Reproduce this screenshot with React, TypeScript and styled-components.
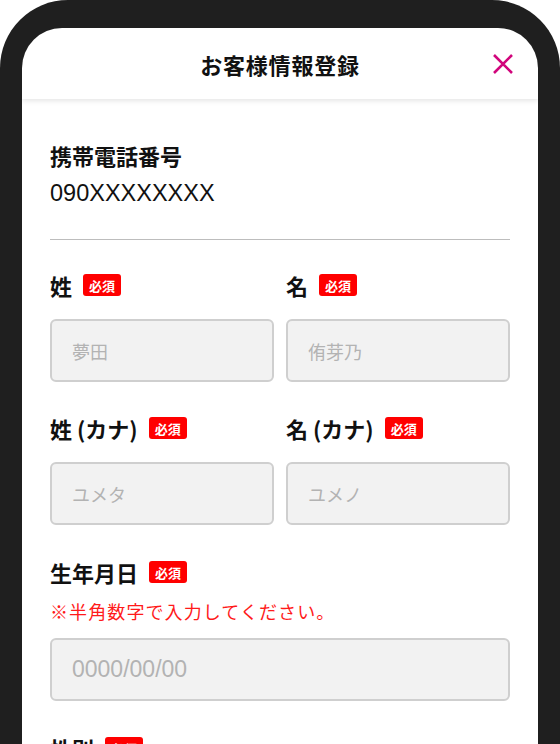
import React, { FunctionComponent } from 'react';
import styled, { createGlobalStyle } from 'styled-components';

const FONT = '"Noto Sans CJK JP", "Noto Sans", sans-serif';
const LATIN_FONT = '"Liberation Sans", "Noto Sans CJK JP", sans-serif';

const GlobalStyle = createGlobalStyle`
  html, body {
    margin: 0;
    padding: 0;
    background: #ffffff;
  }
  * {
    box-sizing: border-box;
  }
`;

const PhoneFrame = styled.div`
  width: 560px;
  height: 744px;
  background: #1f1f1f;
  border-radius: 68px 68px 0 0;
  padding: 28px 22px 0;
  overflow: hidden;
  font-family: ${FONT};
  color: #111111;
`;

const Screen = styled.div`
  height: 100%;
  background: #ffffff;
  border-radius: 40px 40px 0 0;
  overflow: hidden;
  display: flex;
  flex-direction: column;
`;

const Header = styled.header`
  position: relative;
  flex: none;
  height: 71px;
  display: flex;
  align-items: center;
  justify-content: center;
  box-shadow: 0 2px 5px rgba(0, 0, 0, 0.1);
`;

const Title = styled.h1`
  margin: 0;
  font-size: 22px;
  font-weight: 700;
  letter-spacing: 0.8px;
`;

const CloseButton = styled.button`
  position: absolute;
  right: 24px;
  top: 50%;
  transform: translateY(-50%);
  width: 22px;
  height: 22px;
  padding: 0;
  border: none;
  background: none;
  display: flex;
  align-items: center;
  justify-content: center;
`;

const Body = styled.div`
  padding: 41px 28px 0;
`;

type SpacedProps = {
  top?: number;
};

const Label = styled.div<SpacedProps>`
  display: flex;
  align-items: center;
  gap: 11px;
  margin-top: ${(props) => props.top || 0}px;
  font-size: 22px;
  line-height: 30px;
  font-weight: 700;
  white-space: pre;
`;

const Value = styled.div`
  margin-top: 8px;
  font-family: ${LATIN_FONT};
  font-size: 23.5px;
  line-height: 30px;
  font-weight: 400;
`;

const Divider = styled.hr`
  margin: 31px 0 0;
  border: none;
  height: 1px;
  background: #bdbdbd;
`;

const Badge = styled.span`
  display: inline-flex;
  align-items: center;
  height: 22px;
  padding: 0 6px;
  background: #ff0000;
  border-radius: 3px;
  color: #ffffff;
  font-size: 13px;
  font-weight: 700;
  line-height: 1;
`;

const Row = styled.div<SpacedProps>`
  display: grid;
  grid-template-columns: 1fr 1fr;
  column-gap: 12px;
  margin-top: ${(props) => props.top || 0}px;
`;

const Field = styled.div`
  display: flex;
  flex-direction: column;
`;

const Note = styled.div`
  margin-top: 9px;
  font-size: 18px;
  line-height: 30px;
  letter-spacing: 1.1px;
  color: #ff1a1a;
`;

type InputProps = SpacedProps & {
  latin?: boolean;
};

const Input = styled.input<InputProps>`
  display: block;
  width: 100%;
  height: 63px;
  margin-top: ${(props) => props.top || 0}px;
  padding: 0 20px;
  background: #f2f2f2;
  border: 2px solid #cfcfcf;
  border-radius: 6px;
  font-family: ${(props) => (props.latin ? LATIN_FONT : FONT)};
  font-size: ${(props) => (props.latin ? 23 : 18)}px;
  color: #111111;
  outline: none;

  &::placeholder {
    color: #b3b3b3;
  }
`;

type RequiredLabelProps = {
  text: string;
  top?: number;
};

const RequiredLabel: FunctionComponent<RequiredLabelProps> = ({ text, top }) => (
  <Label top={top}>
    {text}
    <Badge>必須</Badge>
  </Label>
);

const CloseIcon = () => (
  <svg width="22" height="22" viewBox="0 0 22 22">
    <path d="M2 2 L20 20 M20 2 L2 20" stroke="#d1067c" strokeWidth="2.6" strokeLinecap="butt" />
  </svg>
);

const App = () => (
  <>
    <GlobalStyle />
    <PhoneFrame>
      <Screen>
        <Header>
          <Title>お客様情報登録</Title>
          <CloseButton aria-label="閉じる">
            <CloseIcon />
          </CloseButton>
        </Header>
        <Body>
          <Label>携帯電話番号</Label>
          <Value>090XXXXXXXX</Value>
          <Divider />

          <Row top={30}>
            <Field>
              <RequiredLabel text="姓" />
              <Input top={19} placeholder="夢田" />
            </Field>
            <Field>
              <RequiredLabel text="名" />
              <Input top={19} placeholder="侑芽乃" />
            </Field>
          </Row>

          <Row top={31}>
            <Field>
              <RequiredLabel text="姓 (カナ)" />
              <Input top={19} placeholder="ユメタ" />
            </Field>
            <Field>
              <RequiredLabel text="名 (カナ)" />
              <Input top={19} placeholder="ユメノ" />
            </Field>
          </Row>

          <RequiredLabel text="生年月日" top={32} />
          <Note>※半角数字で入力してください。</Note>
          <Input top={12} latin placeholder="0000/00/00" />

          <RequiredLabel text="性別" top={32} />
        </Body>
      </Screen>
    </PhoneFrame>
  </>
);

export default App;
